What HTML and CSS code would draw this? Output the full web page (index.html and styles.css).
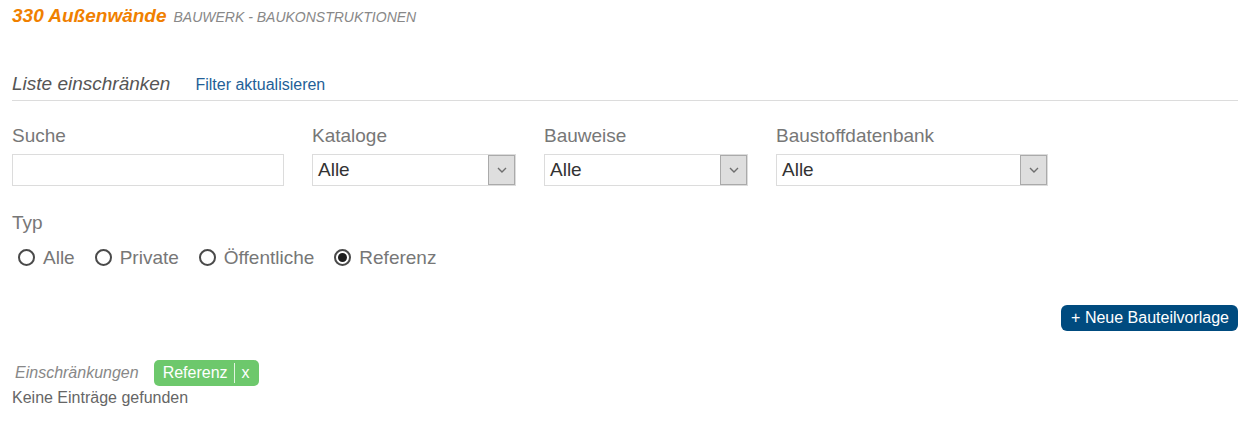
FILE: index.html
```html
<!DOCTYPE html>
<html lang="de">
<head>
<meta charset="utf-8">
<title>330 Außenwände</title>
<link rel="stylesheet" href="styles.css">
</head>
<body>
<div class="page">
  <h1 class="title"><span class="title-main">330 Außenwände</span><span class="title-sub">Bauwerk - Baukonstruktionen</span></h1>

  <div class="filter-head">
    <span class="filter-title">Liste einschränken</span>
    <a class="filter-link" href="#">Filter aktualisieren</a>
  </div>

  <div class="fields">
    <div class="field field-wide">
      <label class="field-label">Suche</label>
      <input class="text-input" type="text">
    </div>
    <div class="field field-narrow">
      <label class="field-label">Kataloge</label>
      <div class="select">
        <span class="select-value">Alle</span>
        <span class="select-arrow"><svg width="10" height="6" viewBox="0 0 10 6"><path d="M1 1 L5 5 L9 1" fill="none" stroke="#6e6e6e" stroke-width="1.4"/></svg></span>
      </div>
    </div>
    <div class="field field-narrow">
      <label class="field-label">Bauweise</label>
      <div class="select">
        <span class="select-value">Alle</span>
        <span class="select-arrow"><svg width="10" height="6" viewBox="0 0 10 6"><path d="M1 1 L5 5 L9 1" fill="none" stroke="#6e6e6e" stroke-width="1.4"/></svg></span>
      </div>
    </div>
    <div class="field field-wide">
      <label class="field-label">Baustoffdatenbank</label>
      <div class="select">
        <span class="select-value">Alle</span>
        <span class="select-arrow"><svg width="10" height="6" viewBox="0 0 10 6"><path d="M1 1 L5 5 L9 1" fill="none" stroke="#6e6e6e" stroke-width="1.4"/></svg></span>
      </div>
    </div>
  </div>

  <div class="typ">
    <div class="field-label">Typ</div>
    <div class="radios">
      <label class="radio"><span class="radio-circle"></span>Alle</label>
      <label class="radio"><span class="radio-circle"></span>Private</label>
      <label class="radio"><span class="radio-circle"></span>Öffentliche</label>
      <label class="radio"><span class="radio-circle is-checked"></span>Referenz</label>
    </div>
  </div>

  <div class="actions">
    <button class="btn-new" type="button">+ Neue Bauteilvorlage</button>
  </div>

  <div class="constraints">
    <span class="constraints-label">Einschränkungen</span>
    <span class="tag"><span class="tag-text">Referenz</span><span class="tag-sep"></span><span class="tag-x">x</span></span>
  </div>
  <p class="empty">Keine Einträge gefunden</p>
</div>
</body>
</html>
```

FILE: styles.css
```css
* { box-sizing: border-box; }

body {
  margin: 0;
  background: #fff;
  font-family: "Liberation Sans", Arial, sans-serif;
  color: #666;
}

.page {
  padding: 5px 16px 0 12px;
}

.title {
  margin: 0;
  font-size: 19px;
  line-height: 22px;
  font-weight: normal;
  display: flex;
  align-items: baseline;
}

.title-main {
  color: #f08000;
  font-weight: bold;
  font-style: italic;
}

.title-sub {
  margin-left: 7px;
  color: #888;
  font-size: 14px;
  font-style: italic;
  text-transform: uppercase;
}

.filter-head {
  margin-top: 45px;
  padding-bottom: 4px;
  border-bottom: 1px solid #dcdcdc;
  display: flex;
  align-items: baseline;
  line-height: 22px;
}

.filter-title {
  font-size: 19px;
  font-style: italic;
  color: #555;
}

.filter-link {
  margin-left: 25px;
  font-size: 16px;
  color: #245f97;
  text-decoration: none;
}

.fields {
  margin-top: 24px;
  display: flex;
  gap: 28px;
}

.field {
  display: flex;
  flex-direction: column;
}

.field-wide { width: 272px; }
.field-narrow { width: 204px; }

.field-label {
  font-size: 19px;
  line-height: 22px;
  color: #777;
}

.text-input {
  margin-top: 7px;
  height: 32px;
  border: 1px solid #dcdcdc;
  width: 100%;
  font: inherit;
}

.select {
  margin-top: 7px;
  height: 32px;
  border: 1px solid #dcdcdc;
  display: flex;
  align-items: stretch;
}

.select-value {
  flex: 1;
  padding-left: 5px;
  font-size: 19px;
  color: #333;
  display: flex;
  align-items: center;
}

.select-arrow {
  width: 27px;
  background: #dedede;
  border: 1px solid #aaa;
  display: flex;
  align-items: center;
  justify-content: center;
}

.typ {
  margin-top: 26px;
}

.radios {
  margin-top: 13px;
  display: flex;
  align-items: center;
  line-height: 22px;
}

.radio {
  display: flex;
  align-items: center;
  font-size: 19px;
  color: #777;
  margin-right: 14px;
}

.radio-circle {
  width: 17px;
  height: 17px;
  margin: 0 8px 0 6px;
  border: 2px solid #4a4a4a;
  border-radius: 50%;
  display: flex;
  align-items: center;
  justify-content: center;
  position: relative;
  top: -1px;
}

.radio-circle.is-checked::after {
  content: "";
  width: 9px;
  height: 9px;
  border-radius: 50%;
  background: #1e1e1e;
}

.actions {
  margin-top: 36px;
  display: flex;
  justify-content: flex-end;
}

.btn-new {
  height: 26px;
  padding: 0 9px 0 10px;
  border: none;
  border-radius: 6px;
  background: #004b7f;
  color: #fff;
  font-family: inherit;
  font-size: 16px;
}

.constraints {
  margin-top: 29px;
  display: flex;
  align-items: center;
}

.constraints-label {
  margin-left: 3px;
  font-size: 16px;
  font-style: italic;
  color: #888;
}

.tag {
  margin-left: 15px;
  height: 26px;
  padding: 0 9px;
  background: #6dc86c;
  border-radius: 5px;
  color: #fff;
  font-size: 16px;
  display: flex;
  align-items: center;
}

.tag-sep {
  width: 1px;
  height: 20px;
  background: rgba(255,255,255,0.8);
  margin: 0 7px 0 6px;
}

.empty {
  margin: 3px 0 0;
  font-size: 16px;
  line-height: 18px;
  color: #666;
}
```
